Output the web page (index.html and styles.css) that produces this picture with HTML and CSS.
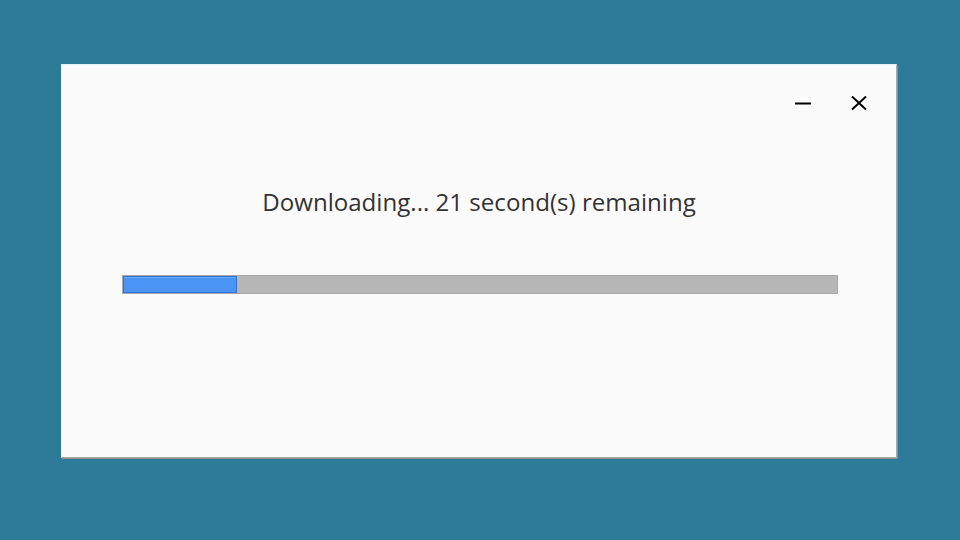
FILE: index.html
```html
<!DOCTYPE html>
<html>
<head>
<meta charset="utf-8">
<link rel="stylesheet" href="styles.css">
</head>
<body>
<div class="dialog">
  <div class="titlebar">
    <button class="ctl min" aria-label="Minimize">
      <svg width="16" height="16" viewBox="0 0 16 16"><path d="M0 8.5H16" stroke="#000" stroke-width="2"/></svg>
    </button>
    <button class="ctl close" aria-label="Close">
      <svg width="16" height="14" viewBox="0 0 16 14"><path d="M1 0.5L15 13.5M15 0.5L1 13.5" stroke="#000" stroke-width="2"/></svg>
    </button>
  </div>
  <p class="status">Downloading... 21 second(s) remaining</p>
  <div class="progress"><div class="fill" style="width:16%"></div></div>
</div>
</body>
</html>
```
FILE: styles.css
```css
html, body { margin: 0; padding: 0; }
body {
  width: 960px; height: 540px;
  background: #2d7a99;
  padding: 64px 0 0 61px;
  box-sizing: border-box;
  font-family: "Open Sans", "Noto Sans", sans-serif;
}
.dialog {
  width: 836px; height: 394px;
  box-sizing: border-box;
  background: #fbfbfb;
  border: 1px solid #e9f1f4;
  border-right-color: #a9a9ab;
  border-bottom-color: #a9a9ab;
  box-shadow: 1px 1px 0 #8c8e94;
  display: flex; flex-direction: column;
}
.titlebar {
  display: flex; justify-content: flex-end; align-items: center;
  gap: 40px;
  padding: 30px 29px 0 0;
  height: 16px;
}
.ctl {
  border: 0; background: none; padding: 0; margin: 0;
  display: flex; width: 16px; height: 16px; align-items: center; justify-content: center;
}
.status {
  margin: 75px 0 0;
  text-align: center;
  font-size: 24.1px;
  color: #333;
  line-height: 32px;
  letter-spacing: 0;
}
.progress {
  margin: 57px 0 0 60px;
  width: 716px; height: 19px;
  box-sizing: border-box;
  background: #b6b6b6;
  border: 1px solid #a8a8a8;
  display: flex;
}
.fill {
  height: 100%;
  box-sizing: border-box;
  background: #4a94f5;
  border: 1px solid #2f74d8;
  box-shadow: inset 0 1px 0 #6aa9f8;
}
```
